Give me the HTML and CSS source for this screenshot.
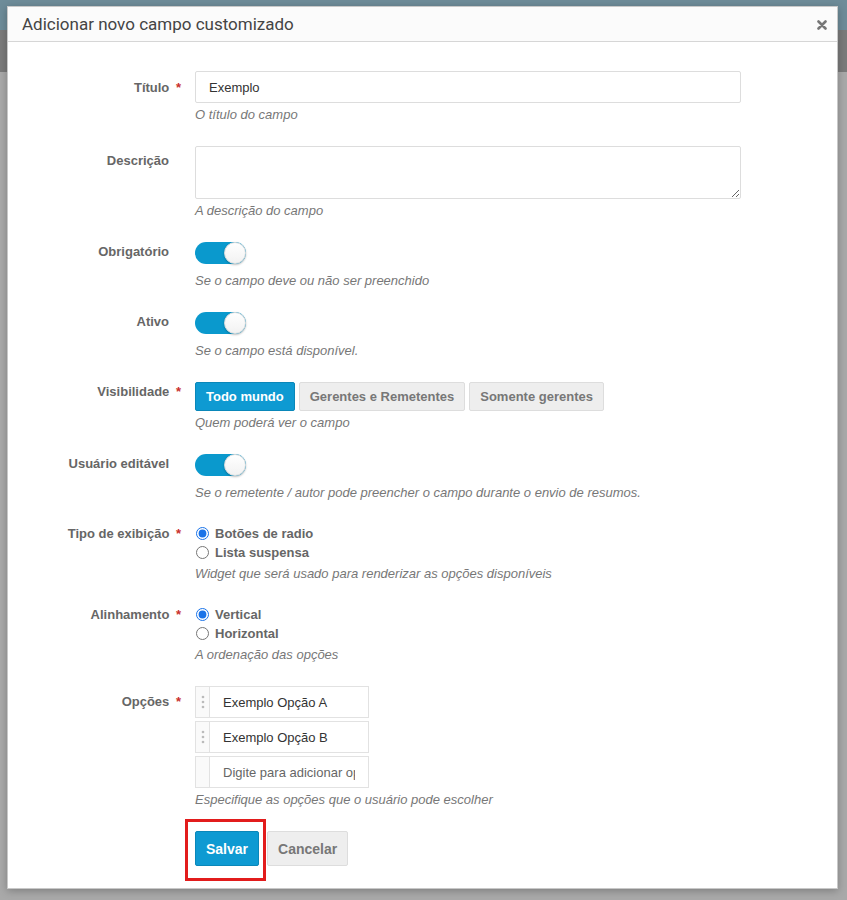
FILE: index.html
```html
<!DOCTYPE html>
<html lang="pt-BR">
<head>
  <meta charset="UTF-8" />
  <meta name="viewport" content="width=device-width, initial-scale=1.0" />
  <title>Adicionar novo campo customizado</title>
  <link rel="stylesheet" href="styles.css">
</head>
<body>
  <div class="modal">
    <div class="cabecalho">
      <h4>Adicionar novo campo customizado</h4>
      <button type="button" class="fechar" aria-label="Fechar">
        <svg width="10" height="10" viewBox="0 0 10 10"><path d="M1.5 1.5l7 7M8.5 1.5l-7 7" stroke="#777" stroke-width="2.6" stroke-linecap="round"/></svg>
      </button>
    </div>

    <form class="corpo">
      <div class="grupo">
        <label class="rotulo pad">Título <span class="req">*</span></label>
        <div class="controle">
          <input class="campo" type="text" value="Exemplo" />
          <p class="ajuda">O título do campo</p>
        </div>
      </div>

      <div class="grupo">
        <label class="rotulo pad-desc">Descrição</label>
        <div class="controle">
          <textarea class="campo area"></textarea>
          <p class="ajuda">A descrição do campo</p>
        </div>
      </div>

      <div class="grupo">
        <label class="rotulo">Obrigatório</label>
        <div class="controle">
          <label class="chave"><input type="checkbox" checked /><span class="trilho"><span class="botao"></span></span></label>
          <p class="ajuda depois-chave">Se o campo deve ou não ser preenchido</p>
        </div>
      </div>

      <div class="grupo">
        <label class="rotulo">Ativo</label>
        <div class="controle">
          <label class="chave"><input type="checkbox" checked /><span class="trilho"><span class="botao"></span></span></label>
          <p class="ajuda depois-chave">Se o campo está disponível.</p>
        </div>
      </div>

      <div class="grupo">
        <label class="rotulo">Visibilidade <span class="req">*</span></label>
        <div class="controle">
          <div class="escolha">
            <button type="button" class="opcao ativa">Todo mundo</button>
            <button type="button" class="opcao">Gerentes e Remetentes</button>
            <button type="button" class="opcao">Somente gerentes</button>
          </div>
          <p class="ajuda">Quem poderá ver o campo</p>
        </div>
      </div>

      <div class="grupo">
        <label class="rotulo">Usuário editável</label>
        <div class="controle">
          <label class="chave"><input type="checkbox" checked /><span class="trilho"><span class="botao"></span></span></label>
          <p class="ajuda depois-chave">Se o remetente / autor pode preencher o campo durante o envio de resumos.</p>
        </div>
      </div>

      <div class="grupo">
        <label class="rotulo">Tipo de exibição <span class="req">*</span></label>
        <div class="controle">
          <label class="radio"><input type="radio" name="tipo" checked /> Botões de radio</label>
          <label class="radio"><input type="radio" name="tipo" /> Lista suspensa</label>
          <p class="ajuda">Widget que será usado para renderizar as opções disponíveis</p>
        </div>
      </div>

      <div class="grupo">
        <label class="rotulo">Alinhamento <span class="req">*</span></label>
        <div class="controle">
          <label class="radio"><input type="radio" name="alinhamento" checked /> Vertical</label>
          <label class="radio"><input type="radio" name="alinhamento" /> Horizontal</label>
          <p class="ajuda">A ordenação das opções</p>
        </div>
      </div>

      <div class="grupo">
        <label class="rotulo pad-op">Opções <span class="req">*</span></label>
        <div class="controle">
          <div class="opcoes">
            <div class="item">
              <span class="alca"><svg width="4" height="14" viewBox="0 0 4 14"><circle cx="2" cy="2" r="1.3" fill="#bbb"/><circle cx="2" cy="7" r="1.3" fill="#bbb"/><circle cx="2" cy="12" r="1.3" fill="#bbb"/></svg></span>
              <input type="text" value="Exemplo Opção A" />
            </div>
            <div class="item">
              <span class="alca"><svg width="4" height="14" viewBox="0 0 4 14"><circle cx="2" cy="2" r="1.3" fill="#bbb"/><circle cx="2" cy="7" r="1.3" fill="#bbb"/><circle cx="2" cy="12" r="1.3" fill="#bbb"/></svg></span>
              <input type="text" value="Exemplo Opção B" />
            </div>
            <div class="item">
              <span class="alca"></span>
              <input type="text" placeholder="Digite para adicionar opções" />
            </div>
          </div>
          <p class="ajuda">Especifique as opções que o usuário pode escolher</p>
        </div>
      </div>

      <div class="acoes">
        <span class="destaque"><button type="button" class="btn salvar">Salvar</button></span>
        <button type="button" class="btn cancelar">Cancelar</button>
      </div>
    </form>
  </div>
</body>
</html>
```

FILE: styles.css
```css
* {
  box-sizing: border-box;
}
body {
  margin: 0;
  min-height: 900px;
  background:
    linear-gradient(#6e8c99 0, #6e8c99 30px, #7b7b7b 30px, #7b7b7b 72px, #a9a9a9 72px);
  font-family: "Liberation Sans", Arial, sans-serif;
  font-size: 13px;
  color: #333;
  padding: 6px 9px 0 7px;
}

/* janela */
.modal {
  background: #fff;
  border: 1px solid #c8c8c8;
  box-shadow: 0 2px 8px rgba(0, 0, 0, 0.25);
  width: 831px;
}
.cabecalho {
  display: flex;
  align-items: center;
  justify-content: space-between;
  height: 35px;
  padding: 0 10px 0 14px;
  background: #fbfbfb;
  border-bottom: 1px solid #d6d6d6;
}
.cabecalho h4 {
  margin: 0;
  font-family: Roboto, "Liberation Sans", sans-serif;
  font-weight: 400;
  font-size: 17px;
  color: #444;
}
.fechar {
  border: 0;
  background: none;
  padding: 0;
  display: flex;
  margin-top: 2px;
}

/* formulário */
.corpo {
  padding: 29px 0 22px 14px;
}
.grupo {
  display: flex;
  margin-bottom: 23px;
}
.rotulo {
  width: 147px;
  flex: none;
  text-align: right;
  font-weight: bold;
  color: #666;
  line-height: 18px;
  padding-top: 1px;
}
.rotulo.pad {
  padding-top: 8px;
}
.rotulo.pad-desc {
  padding-top: 6px;
}
.rotulo.pad-op {
  padding-top: 7px;
}
.req {
  color: #c9302c;
  margin-left: 3px;
  margin-right: -12px;
}
.controle {
  margin-left: 26px;
  width: 546px;
}
.ajuda {
  margin: 4px 0 0;
  line-height: 16px;
  font-style: italic;
  color: #777;
  white-space: nowrap;
}
.ajuda.depois-chave {
  margin-top: 9px;
}
.campo {
  display: block;
  width: 546px;
  height: 32px;
  padding: 0 13px;
  border: 1px solid #ddd;
  border-radius: 2px;
  font-family: inherit;
  font-size: 13px;
  color: #333;
}
.area {
  height: 53px;
  padding: 6px 13px;
}

/* chave liga/desliga */
.chave {
  display: block;
  width: 52px;
  height: 22px;
}
.chave input {
  display: none;
}
.trilho {
  display: flex;
  justify-content: flex-end;
  width: 51px;
  height: 22px;
  border-radius: 11px;
  background: #0a99cd;
}
.botao {
  width: 22px;
  height: 22px;
  border-radius: 50%;
  background: linear-gradient(#fff, #f2f2f2);
  border: 1px solid #dcdcdc;
  box-shadow: 0 1px 2px rgba(0, 0, 0, 0.25);
}

/* grupo de botões */
.escolha {
  display: flex;
  gap: 4px;
}
.opcao {
  height: 29px;
  padding: 0 10px;
  border: 1px solid #ddd;
  border-radius: 2px;
  background: #eee;
  color: #777;
  font-family: inherit;
  font-size: 13px;
  font-weight: bold;
}
.opcao.ativa {
  background: #0e9ad2;
  border-color: #0a87b9;
  color: #fff;
}

/* radios */
.radio {
  display: flex;
  align-items: center;
  height: 19px;
  font-weight: bold;
  color: #666;
}
.radio input {
  margin: 0 6px 0 1px;
  width: 13px;
  height: 13px;
  accent-color: #1a73e8;
}

/* lista de opções */
.opcoes {
  display: flex;
  flex-direction: column;
  gap: 3px;
  width: 174px;
}
.item {
  display: flex;
  height: 32px;
  border: 1px solid #e2e2e2;
}
.alca {
  width: 14px;
  flex: none;
  display: flex;
  align-items: center;
  justify-content: center;
  background: #fafafa;
  border-right: 1px solid #e2e2e2;
}
.item input {
  flex: 1;
  min-width: 0;
  border: 0;
  padding: 0 13px;
  font-family: inherit;
  font-size: 13px;
  color: #333;
  outline: none;
}
.item input::placeholder {
  color: #666;
}

/* ações */
.acoes {
  margin: 1px 0 0 173px;
  display: flex;
}
.destaque {
  position: relative;
  display: inline-flex;
}
.destaque::after {
  content: "";
  position: absolute;
  left: -10px;
  right: -7px;
  top: -12px;
  bottom: -15px;
  border: 3px solid #e21c1c;
}
.btn {
  height: 35px;
  padding: 0 10px;
  border: 1px solid #ddd;
  border-radius: 2px;
  font-family: inherit;
  font-size: 14px;
  font-weight: bold;
}
.salvar {
  background: #0e9ad2;
  border-color: #0a87b9;
  color: #fff;
}
.cancelar {
  margin-left: 8px;
  background: #eee;
  color: #777;
}
```
